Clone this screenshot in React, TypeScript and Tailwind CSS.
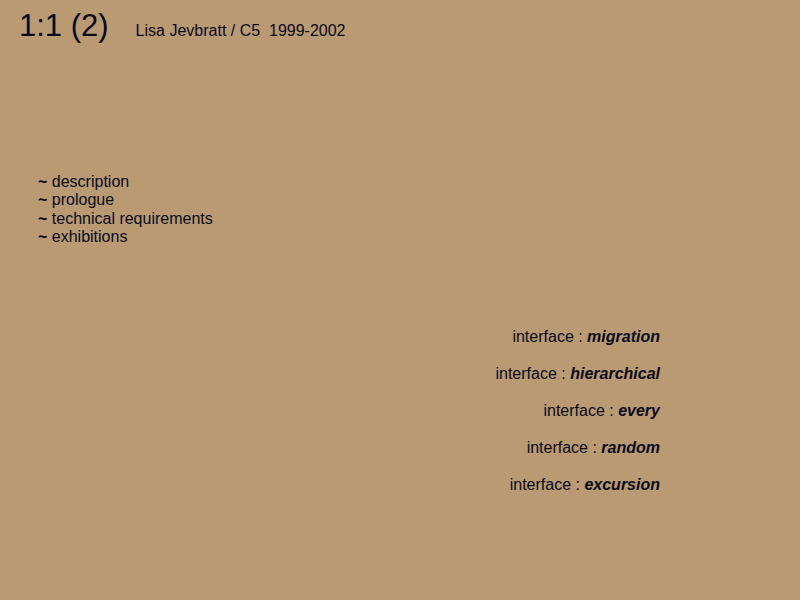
import React from 'react';

const menu = ['description', 'prologue', 'technical requirements', 'exhibitions'];
const interfaces = ['migration', 'hierarchical', 'every', 'random', 'excursion'];

const App: React.FC = () => {
  return (
    <div
      className="w-[800px] h-[600px] bg-[#b99a72] text-[#0a0a1e] overflow-hidden"
      style={{ fontFamily: '"Liberation Sans", Arial, sans-serif' }}
    >
      {/* Header */}
      <div className="flex items-baseline pl-[19px] pt-[7px]">
        <h1 className="text-[31px] leading-[37px]">1:1 (2)</h1>
        <span className="ml-[27px] text-[16px] whitespace-pre">Lisa Jevbratt / C5  1999-2002</span>
      </div>

      {/* Menu */}
      <ul className="mt-[129px] pl-[38px] text-[16px] leading-[18.4px]">
        {menu.map((item) => (
          <li key={item}>
            <b>~</b> {item}
          </li>
        ))}
      </ul>

      {/* Interfaces */}
      <div className="mt-[81px] w-[660px] flex flex-col items-end gap-[18.6px] text-[16px] leading-[18.4px]">
        {interfaces.map((name) => (
          <div key={name}>
            interface : <b><i>{name}</i></b>
          </div>
        ))}
      </div>
    </div>
  );
};

export default App;
